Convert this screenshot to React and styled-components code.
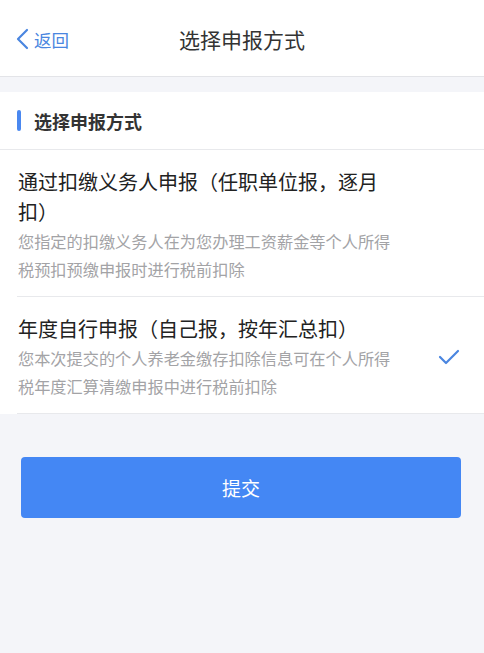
import React, { useState } from 'react';
import styled, { createGlobalStyle } from 'styled-components';

const GlobalStyle = createGlobalStyle`
  html, body {
    margin: 0;
    padding: 0;
    background: #f4f5f9;
    font-family: "Noto Sans CJK SC", "Noto Sans", sans-serif;
  }
  * { box-sizing: border-box; }
`;

const Page = styled.div`
  min-height: 653px;
  background: #f4f5f9;
`;

const NavBar = styled.div`
  height: 77px;
  background: #fff;
  border-bottom: 1px solid #e3e4e8;
  display: grid;
  grid-template-columns: 1fr auto 1fr;
  align-items: center;
  padding: 0 16px;
`;

const Back = styled.div`
  display: flex;
  align-items: center;
  gap: 5px;
  color: #4a86e0;
  font-size: 17.5px;
  padding-top: 2px;
`;

const NavTitle = styled.div`
  font-size: 21px;
  color: #333;
  padding-top: 2px;
`;

const Card = styled.div`
  margin-top: 15px;
  background: #fff;
`;

const SectionHead = styled.div`
  height: 58px;
  display: flex;
  align-items: center;
  gap: 13px;
  padding-left: 17px;
  border-bottom: 1px solid #e8e9ec;
  font-size: 18px;
  font-weight: bold;
  color: #333;
`;

const Bar = styled.span`
  width: 4px;
  height: 21px;
  border-radius: 2px;
  background: #4a88f0;
`;

const Option = styled.div`
  margin-left: 17px;
  padding: 17px 24px 13px 1px;
  border-bottom: 1px solid #e8e9ec;
  display: flex;
  align-items: center;
  justify-content: space-between;
  cursor: pointer;
`;

const OptionText = styled.div`
  width: 374px;
`;

const OptionTitle = styled.div`
  font-size: 20px;
  line-height: 30px;
  color: #222;
`;

const OptionDesc = styled.div`
  font-size: 16.2px;
  line-height: 28px;
  color: #a3a3a6;
`;

const Check = styled.div`
  width: 22px;
  display: flex;
  justify-content: center;
`;

const Footer = styled.div`
  padding: 43px 23px 0 21px;
`;

const Submit = styled.button`
  width: 100%;
  height: 61px;
  border: none;
  border-radius: 4px;
  background: #4487f4;
  color: #fff;
  font-size: 19px;
  font-family: inherit;
`;

const options = [
  {
    title: '通过扣缴义务人申报（任职单位报，逐月扣）',
    desc: '您指定的扣缴义务人在为您办理工资薪金等个人所得税预扣预缴申报时进行税前扣除',
  },
  {
    title: '年度自行申报（自己报，按年汇总扣）',
    desc: '您本次提交的个人养老金缴存扣除信息可在个人所得税年度汇算清缴申报中进行税前扣除',
  },
];

const App = () => {
  const [selected, setSelected] = useState(1);

  return (
    <Page>
      <GlobalStyle />
      <NavBar>
        <Back>
          <svg width="13" height="22" viewBox="0 0 13 22">
            <path d="M11 2 L2 11 L11 20" fill="none" stroke="#4a86e0" strokeWidth="2.2" strokeLinecap="round" strokeLinejoin="round" />
          </svg>
          返回
        </Back>
        <NavTitle>选择申报方式</NavTitle>
        <div />
      </NavBar>
      <Card>
        <SectionHead>
          <Bar />
          选择申报方式
        </SectionHead>
        {options.map((o, i) => (
          <Option key={i} onClick={() => setSelected(i)}>
            <OptionText>
              <OptionTitle>{o.title}</OptionTitle>
              <OptionDesc>{o.desc}</OptionDesc>
            </OptionText>
            <Check>
              {selected === i ? (
                <svg width="22" height="16" viewBox="0 0 22 16">
                  <path d="M2 8 L8 14 L20 2" fill="none" stroke="#4a86e0" strokeWidth="2.2" strokeLinecap="round" strokeLinejoin="round" />
                </svg>
              ) : null}
            </Check>
          </Option>
        ))}
      </Card>
      <Footer>
        <Submit>提交</Submit>
      </Footer>
    </Page>
  );
};

export default App;
